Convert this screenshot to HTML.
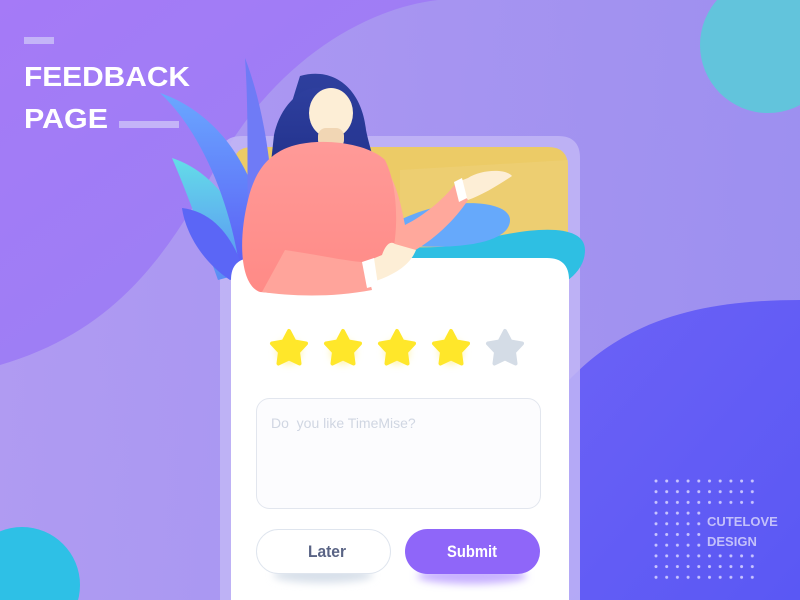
<!DOCTYPE html>
<html><head><meta charset="utf-8"><style>
html,body{margin:0;padding:0;width:800px;height:600px;overflow:hidden;font-family:"Liberation Sans",sans-serif}
svg{display:block}
</style></head><body>
<svg width="800" height="600" viewBox="0 0 800 600" xmlns="http://www.w3.org/2000/svg">
<defs>
<linearGradient id="bg" x1="0" y1="0" x2="1" y2="1"><stop offset="0" stop-color="#a57af7"/><stop offset="1" stop-color="#8f86f0"/></linearGradient>
<linearGradient id="bl" x1="0" y1="0" x2="1" y2="0"><stop offset="0" stop-color="#b3a0f2"/><stop offset="1" stop-color="#9e92ef"/></linearGradient>
<linearGradient id="br" x1="0" y1="0" x2="1" y2="1"><stop offset="0" stop-color="#6d62f6"/><stop offset="1" stop-color="#5a58f4"/></linearGradient>
<linearGradient id="sw" x1="0" y1="0" x2="0" y2="1"><stop offset="0" stop-color="#ff9a98"/><stop offset="1" stop-color="#ff8a86"/></linearGradient>
<linearGradient id="hair" x1="0" y1="0" x2="0" y2="1"><stop offset="0" stop-color="#2e3f9e"/><stop offset="1" stop-color="#1f2e87"/></linearGradient>
<linearGradient id="leaf" x1="0" y1="0" x2="0" y2="1"><stop offset="0" stop-color="#6aa8ff"/><stop offset="1" stop-color="#5b5cf5"/></linearGradient>
<linearGradient id="leaf2" x1="0" y1="0" x2="0" y2="1"><stop offset="0" stop-color="#64dde8"/><stop offset="1" stop-color="#5a8cf5"/></linearGradient>
<pattern id="dots" x="654" y="479" width="10.7" height="10.7" patternUnits="userSpaceOnUse"><circle cx="2" cy="2" r="1.5" fill="#c8c4ff"/></pattern>
<filter id="glow" x="-50%" y="-50%" width="200%" height="200%"><feGaussianBlur stdDeviation="4"/></filter>
</defs>
<rect width="800" height="600" fill="url(#bg)"/>
<path d="M0 365 C 120 330, 170 250, 220 160 C 290 40, 400 -10, 480 0 L800 0 L800 330 C 700 330, 610 350, 560 390 L560 600 L0 600 Z" fill="url(#bl)" opacity="0.85"/>
<path d="M560 390 C 620 320, 700 300, 800 300 L800 600 L540 600 Z" fill="url(#br)"/>
<circle cx="768" cy="45" r="68" fill="#62c4dc"/>
<circle cx="22" cy="585" r="58" fill="#2ec0e6"/>
<rect x="24" y="37" width="30" height="7" fill="#c4b4f8"/>
<rect x="119" y="121" width="60" height="7" fill="#c4b4f8"/>
<text x="24" y="86" font-size="28" font-weight="bold" fill="#fff" textLength="166" lengthAdjust="spacingAndGlyphs">FEEDBACK</text>
<text x="24" y="128" font-size="28" font-weight="bold" fill="#fff" textLength="84" lengthAdjust="spacingAndGlyphs">PAGE</text>
<rect x="654" y="479" width="107" height="32" fill="url(#dots)"/>
<rect x="654" y="511" width="53" height="43" fill="url(#dots)"/>
<rect x="654" y="554" width="107" height="30" fill="url(#dots)"/>
<text x="707" y="526" font-size="13" font-weight="bold" fill="#c3c0fa">CUTELOVE</text>
<text x="707" y="546" font-size="13" font-weight="bold" fill="#c3c0fa">DESIGN</text>
<path d="M242 136 L558 136 Q580 136 580 158 L580 600 L220 600 L220 158 Q220 136 242 136Z" fill="#c2b6f6" opacity="0.85"/>
<path d="M252 147 L548 147 Q568 147 568 167 L568 260 L233 260 L233 167 Q233 147 252 147Z" fill="#eccb66"/>
<path d="M400 170 L568 160 L568 260 L400 260Z" fill="#efd078" opacity="0.6"/>
<path d="M233 255 C 330 230, 420 260, 480 240 C 540 225, 585 225, 585 250 C 585 265, 575 275, 568 280 L233 280Z" fill="#2ebfe3"/>
<path d="M400 220 C 450 195, 510 200, 510 220 C 510 245, 450 250, 400 245Z" fill="#66a9fb"/>
<path d="M218 280 C 200 230, 190 200, 172 158 C 210 170, 245 210, 255 270Z" fill="url(#leaf2)"/>
<path d="M240 270 C 230 200, 200 130, 160 93 C 210 110, 260 160, 270 260Z" fill="url(#leaf)"/>
<path d="M250 260 C 245 190, 250 130, 245 58 C 265 110, 275 180, 275 260Z" fill="#6f7bf6"/>
<path d="M230 280 C 200 260, 185 230, 182 208 C 215 212, 235 240, 245 275Z" fill="#5b66f6"/>
<path d="M253 258 L547 258 Q569 258 569 280 L569 600 L231 600 L231 280 Q231 258 253 258Z" fill="#fff"/>
<path d="M300 76 C 335 66, 362 90, 366 130 C 372 160, 385 185, 382 215 L275 225 C 268 180, 280 140, 300 76Z" fill="url(#hair)"/>
<path d="M274 135 C 282 95, 320 72, 340 100 L330 160 L268 190Z" fill="url(#hair)"/>
<ellipse cx="331" cy="113" rx="22" ry="25" fill="#fdeed6"/>
<rect x="318" y="128" width="26" height="20" rx="8" fill="#f1d6b4"/>
<path d="M378 160 C 395 175, 400 200, 405 225 C 425 215, 445 198, 456 183 L468 200 C 455 220, 430 245, 400 258 L380 255Z" fill="#ffa89c"/>
<path d="M455 183 L468 178 C 480 170, 505 168, 512 176 C 497 186, 482 195, 468 200Z" fill="#fdeed6"/>
<path d="M454 182 L462 178 L467 198 L459 202Z" fill="#fff"/>
<path d="M300 144 C 330 138, 370 145, 385 160 C 400 190, 398 240, 390 262 C 378 290, 320 298, 260 292 C 240 285, 238 240, 248 200 C 255 170, 270 150, 300 144Z" fill="url(#sw)"/>
<path d="M285 250 C 320 255, 350 262, 365 262 L372 290 C 330 298, 290 296, 262 292Z" fill="#ffa49b"/>
<path d="M365 262 L382 255 C 385 246, 390 240, 395 244 L416 250 C 410 265, 395 275, 370 283Z" fill="#fdeed6"/>
<path d="M362 262 L374 258 L378 285 L367 288Z" fill="#fff"/>
<g>
<circle cx="289" cy="352" r="12" fill="#fff3a0" filter="url(#glow)"/>
<circle cx="343" cy="352" r="12" fill="#fff3a0" filter="url(#glow)"/>
<circle cx="397" cy="352" r="12" fill="#fff3a0" filter="url(#glow)"/>
<circle cx="451" cy="352" r="12" fill="#fff3a0" filter="url(#glow)"/>
</g>
<g stroke-linejoin="round" stroke-width="4">
<path id="st" d="M289 331 L294.5 341.5 L306 343.5 L298 352 L299.5 363.5 L289 358.5 L278.5 363.5 L280 352 L272 343.5 L283.5 341.5Z" fill="#ffe72a" stroke="#ffe72a"/>
<use href="#st" transform="translate(54 0)"/>
<use href="#st" transform="translate(108 0)"/>
<use href="#st" transform="translate(162 0)"/>
<path d="M505 331 L510.5 341.5 L522 343.5 L514 352 L515.5 363.5 L505 358.5 L494.5 363.5 L496 352 L488 343.5 L499.5 341.5Z" fill="#d4dce6" stroke="#d4dce6"/>
</g>
<rect x="256.5" y="398.5" width="284" height="110" rx="13" fill="#fcfcfe" stroke="#e2e6ee"/>
<text x="271" y="428" font-size="14" fill="#d0d6e2" xml:space="preserve">Do  you like TimeMise?</text>
<ellipse cx="323" cy="575" rx="50" ry="8" fill="#d8e0ea" filter="url(#glow)"/>
<ellipse cx="472" cy="576" rx="55" ry="8" fill="#c7b0ff" filter="url(#glow)"/>
<rect x="256.5" y="529.5" width="134" height="44" rx="22" fill="#fff" stroke="#dfe5ee"/>
<rect x="405" y="529" width="135" height="45" rx="22.5" fill="#8f66f9"/>
<text x="308" y="557" font-size="17" font-weight="bold" fill="#5a6485" textLength="38" lengthAdjust="spacingAndGlyphs">Later</text>
<text x="447" y="557" font-size="17" font-weight="bold" fill="#fff" textLength="50" lengthAdjust="spacingAndGlyphs">Submit</text>
</svg>
</body></html>
